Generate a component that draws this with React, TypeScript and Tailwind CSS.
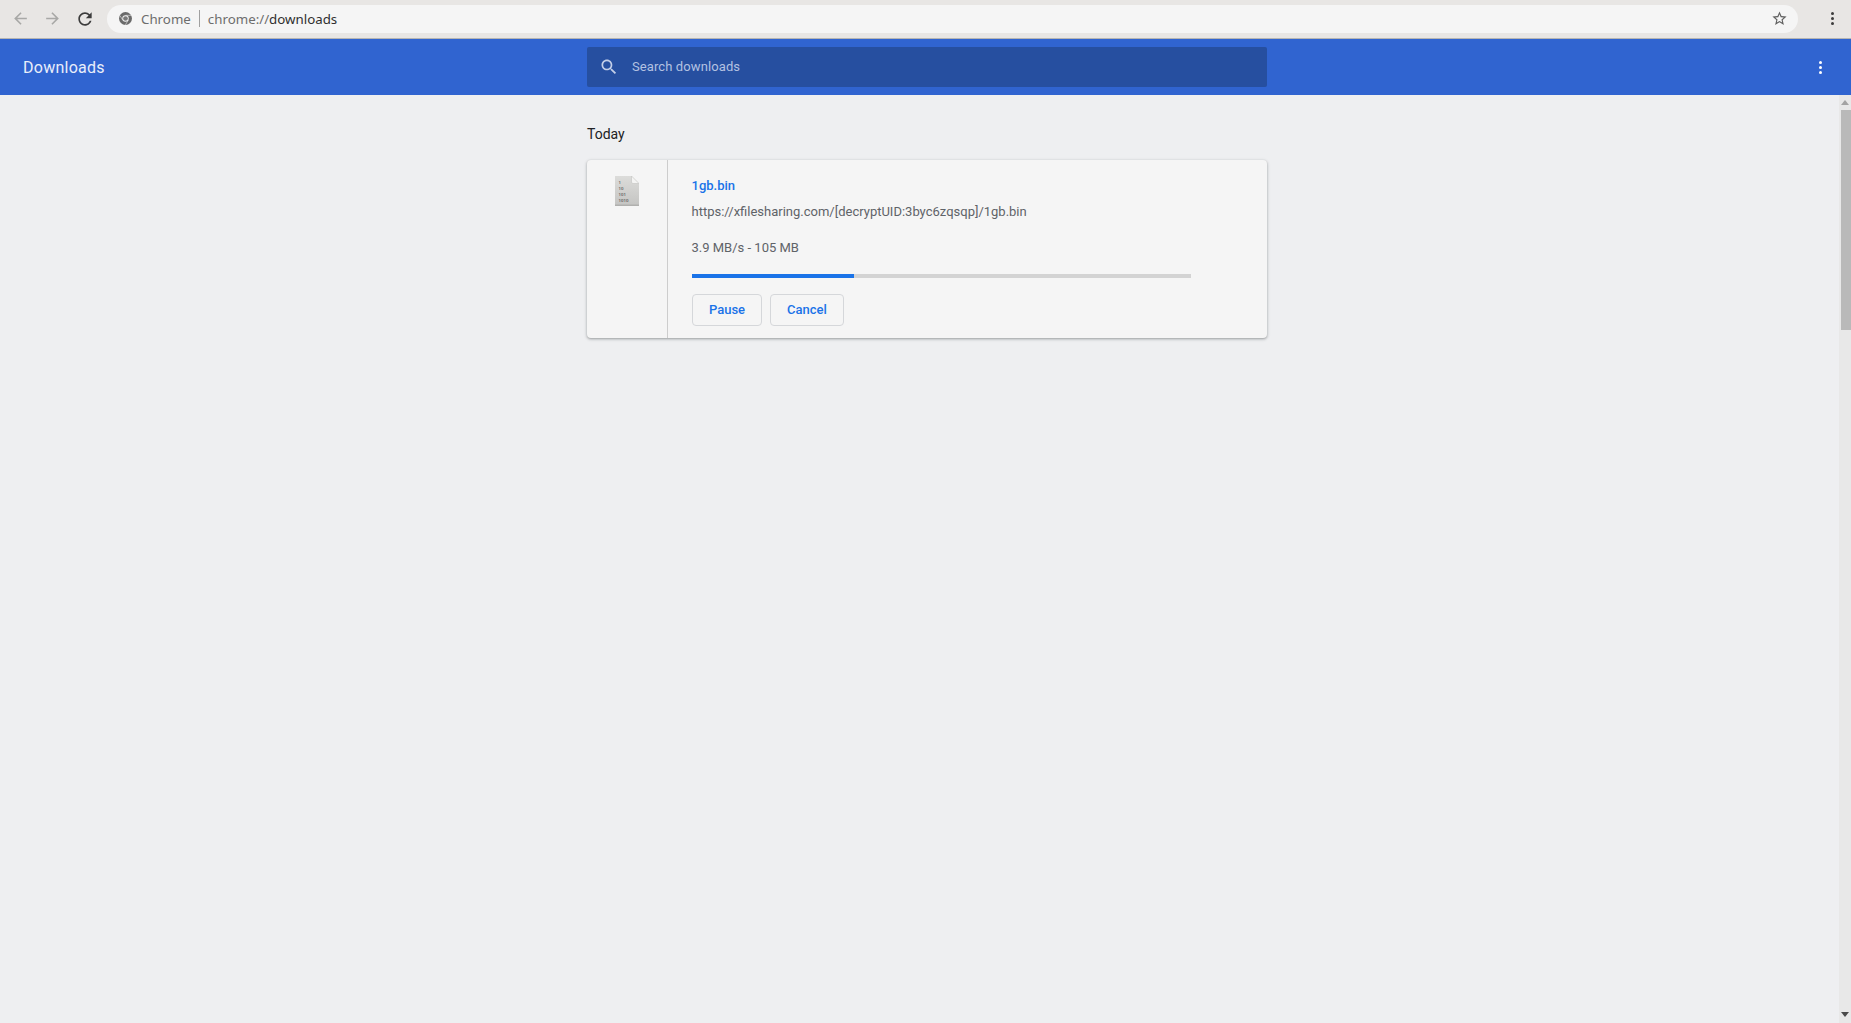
const BACK = "M20 11H7.83l5.59-5.59L12 4l-8 8 8 8 1.41-1.41L7.83 13H20v-2z";
const FORWARD = "M4 11h12.17l-5.59-5.59L12 4l8 8-8 8-1.41-1.41L16.17 13H4v-2z";
const RELOAD =
  "M17.65 6.35C16.2 4.9 14.21 4 12 4c-4.42 0-7.99 3.58-7.99 8s3.57 8 7.99 8c3.73 0 6.84-2.55 7.73-6h-2.08c-.82 2.33-3.04 4-5.65 4-3.31 0-6-2.69-6-6s2.69-6 6-6c1.66 0 3.14.69 4.22 1.78L13 11h7V4l-2.35 2.35z";
const SEARCH =
  "M15.5 14h-.79l-.28-.27C15.41 12.59 16 11.11 16 9.5 16 5.91 13.09 3 9.5 3S3 5.91 3 9.5 5.91 16 9.5 16c1.61 0 3.09-.59 4.23-1.57l.27.28v.79l5 4.99L20.49 19l-4.99-5zm-6 0C7.01 14 5 11.99 5 9.5S7.01 5 9.5 5 14 7.01 14 9.5 11.99 14 9.5 14z";
const STAR =
  "M22 9.24l-7.19-.62L12 2 9.19 8.63 2 9.24l5.46 4.73L5.82 21 12 17.27 18.18 21l-1.63-7.03L22 9.24zM12 15.4l-3.76 2.27 1-4.28-3.32-2.88 4.38-.38L12 6.1l1.71 4.04 4.38.38-3.32 2.88 1 4.28L12 15.4z";

function Icon({ d, className }: { d: string; className: string }) {
  return (
    <svg viewBox="0 0 24 24" fill="currentColor" className={className}>
      <path d={d} />
    </svg>
  );
}

function ChromeLogo() {
  return (
    <svg viewBox="0 0 16 16" className="h-[13px] w-[13px] shrink-0">
      <circle cx="8" cy="8" r="8" fill="#6a6a6a" />
      <circle cx="8" cy="8" r="3.9" fill="#f5f5f5" />
      <circle cx="8" cy="8" r="2.9" fill="#7a7a7a" />
      <path d="M8 4.1h7.2M4.6 10 1.2 4.4M11.4 10l-3.6 5.9" stroke="#f5f5f5" strokeWidth="0.7" />
    </svg>
  );
}

function FileIcon() {
  return (
    <svg viewBox="0 0 24 30" className="h-[30px] w-[24px]">
      <defs>
        <linearGradient id="sheet" x1="0" y1="0" x2="0" y2="1">
          <stop offset="0" stopColor="#dcdcda" />
          <stop offset="1" stopColor="#c4c4c2" />
        </linearGradient>
      </defs>
      <path d="M0 0h16.5L24 7.5V30H0z" fill="url(#sheet)" />
      <path d="M0 28.5h24V30H0z" fill="#b0b0ae" />
      <path d="M16.5 0 24 7.5h-6a1.5 1.5 0 0 1-1.5-1.5z" fill="#f4f4f3" stroke="#bdbdbb" strokeWidth="0.5" />
      <g fill="#333" fontSize="4.4" fontFamily="Roboto, sans-serif">
        <text x="3.5" y="7.5">1</text>
        <text x="3.5" y="13.5">10</text>
        <text x="3.5" y="19.5">101</text>
        <text x="3.5" y="25.5">1010</text>
      </g>
    </svg>
  );
}

function Dots({ className }: { className: string }) {
  return (
    <div className={`flex flex-col gap-[2px] ${className}`}>
      <span className="h-[3px] w-[3px] rounded-full bg-current" />
      <span className="h-[3px] w-[3px] rounded-full bg-current" />
      <span className="h-[3px] w-[3px] rounded-full bg-current" />
    </div>
  );
}

function Toolbar() {
  return (
    <div className="flex h-[39px] items-center border-b border-[#b5b5b3] bg-[#e8e6e4] pb-px">
      <Icon d={BACK} className="ml-[11px] h-[19px] w-[19px] text-[#a8a8a6]" />
      <Icon d={FORWARD} className="ml-[13px] h-[19px] w-[19px] text-[#a8a8a6]" />
      <Icon d={RELOAD} className="ml-[13px] h-[20px] w-[20px] text-[#3c3c3c]" />
      <div className="ml-[12px] flex h-[28px] flex-1 items-center rounded-full bg-[#f5f5f5] pl-[12px] pr-[10px] font-['Noto_Sans',sans-serif] text-[13.3px]">
        <ChromeLogo />
        <span className="ml-[9px] pt-[2px] text-[#6d6d6d]">Chrome</span>
        <span className="mx-[8px] h-[17px] w-px bg-[#a0a0a0]" />
        <span className="pt-[2px] text-[#6d6d6d]">
          chrome://<span className="text-[#2f2f2f]">downloads</span>
        </span>
        <Icon d={STAR} className="ml-auto h-[17px] w-[17px] text-[#5f5f5f]" />
      </div>
      <Dots className="ml-[33px] mr-[17px] text-[#3c3c3c]" />
    </div>
  );
}

function Header() {
  return (
    <div className="flex h-[56px] items-center bg-[#3064d0] font-['Roboto',sans-serif]">
      <h1 className="w-[587px] pl-[23px] pt-[2px] text-[16px] tracking-[0.25px] text-[#e9eefa]">Downloads</h1>
      <div className="flex h-[40px] w-[680px] items-center rounded-[2px] bg-[#264fa0] pl-[12px]">
        <Icon d={SEARCH} className="h-[20px] w-[20px] text-[#c3cfe8]" />
        <span className="ml-[13px] text-[13px] tracking-[0.1px] text-[#b3c2e2]">Search downloads</span>
      </div>
      <Dots className="ml-auto mr-[29px] text-white" />
    </div>
  );
}

function DownloadCard() {
  return (
    <div className="flex h-[178px] w-[680px] rounded-[4px] bg-[#f5f5f5] shadow-[0_1px_2px_rgba(60,64,67,0.3),0_1px_3px_1px_rgba(60,64,67,0.15)]">
      <div className="flex w-[81px] shrink-0 justify-center border-r border-[#cdcdcd] pt-[16px]">
        <FileIcon />
      </div>
      <div className="flex-1 pl-[24px] text-[13px]">
        <p className="-ml-[0.5px] mt-[16px] h-[20px] font-medium leading-[20px] text-[#1a73e8]">1gb.bin</p>
        <p className="-ml-[0.5px] mt-[6px] h-[20px] leading-[20px] text-[#5f6368]">
          https://xfilesharing.com/[decryptUID:3byc6zqsqp]/1gb.bin
        </p>
        <p className="-ml-[0.5px] mt-[16px] h-[20px] leading-[20px] text-[#5f6368]">3.9 MB/s - 105 MB</p>
        <div className="mt-[16px] h-[4px] w-[499px] bg-[#d3d3d3]">
          <div className="h-full w-[162px] bg-[#1a73e8]" />
        </div>
        <div className="mt-[16px] flex gap-[8px] text-[#1a73e8]">
          <button className="h-[32px] w-[70px] rounded-[4px] border border-[#d5d7da] font-medium">Pause</button>
          <button className="h-[32px] w-[74px] rounded-[4px] border border-[#d5d7da] font-medium">Cancel</button>
        </div>
      </div>
    </div>
  );
}

function Scrollbar() {
  return (
    <div className="flex w-[12px] shrink-0 flex-col items-end bg-[#e8e8e8]">
      <div className="mx-auto mt-[5px] h-0 w-0 border-x-[4px] border-b-[5px] border-x-transparent border-b-[#a3a3a3]" />
      <div className="mt-[5px] h-[220px] w-[10px] bg-[#b9b9b9]" />
      <div className="mx-auto mb-[6px] mt-auto h-0 w-0 border-x-[4px] border-t-[5px] border-x-transparent border-t-[#4a4a4a]" />
    </div>
  );
}

export default function App() {
  return (
    <div className="flex h-screen flex-col overflow-hidden bg-[#eeeff1] font-['Roboto',sans-serif]">
      <Toolbar />
      <Header />
      <div className="flex min-h-0 flex-1">
        <main className="flex-1 pl-[587px]">
          <h2 className="mt-[29px] h-[20px] text-[14px] font-normal leading-[20px] text-[#202124]">Today</h2>
          <div className="mt-[16px]">
            <DownloadCard />
          </div>
        </main>
        <Scrollbar />
      </div>
    </div>
  );
}
